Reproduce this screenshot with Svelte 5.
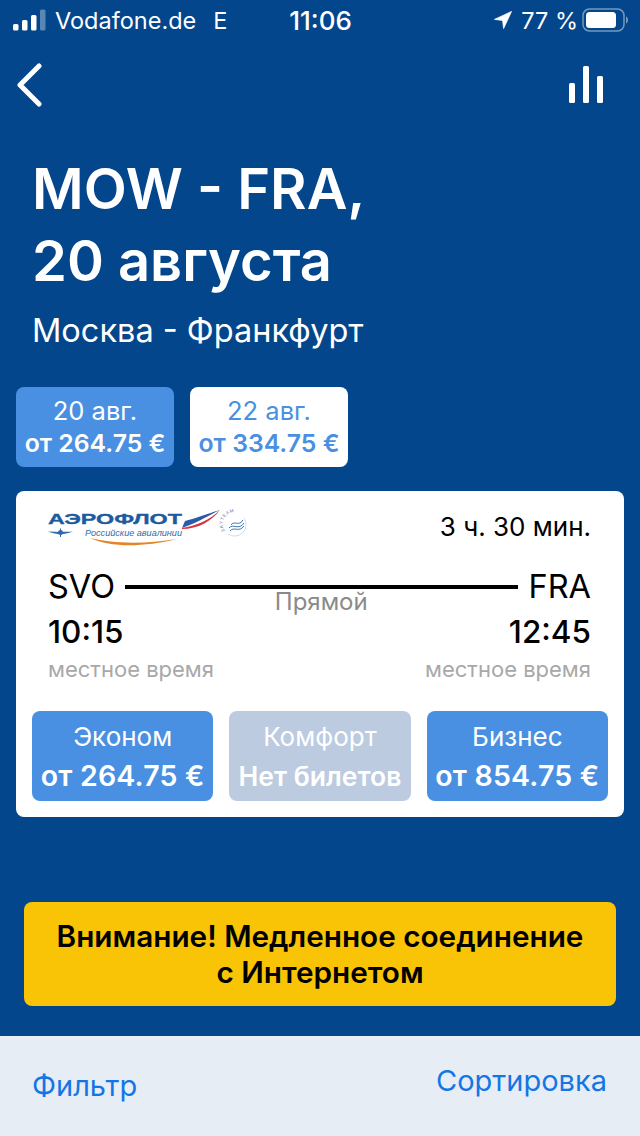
<script>
  const dates = [
    { day: "20 авг.", price: "от 264.75 €", active: true },
    { day: "22 авг.", price: "от 334.75 €", active: false },
  ];
  const fares = [
    { name: "Эконом", price: "от 264.75 €", off: false },
    { name: "Комфорт", price: "Нет билетов", off: true },
    { name: "Бизнес", price: "от 854.75 €", off: false },
  ];
</script>

<div class="page">
  <div class="status">
    <div class="status-left">
      <svg width="33" height="22" viewBox="0 0 33 22" fill="#fff">
        <rect x="0" y="15" width="5.5" height="6.5" rx="1.5" />
        <rect x="9" y="11" width="5.5" height="10.5" rx="1.5" />
        <rect x="18" y="6" width="5.5" height="15.5" rx="1.5" />
        <rect x="27" y="0.5" width="5.5" height="21" rx="1.5" opacity="0.35" />
      </svg>
      <span class="carrier">Vodafone.de</span>
      <span class="net">E</span>
    </div>
    <span class="clock">11:06</span>
    <div class="status-right">
      <svg class="arrow" width="18" height="18" viewBox="0 0 18 18" fill="#fff">
        <path d="M17.5 0.5 L0.5 8.4 L8.6 9.4 L9.6 17.5 Z" stroke="#fff" stroke-width="0.8" stroke-linejoin="round" />
      </svg>
      <span class="pct">77 %</span>
      <svg width="46" height="24" viewBox="0 0 46 24" fill="none">
        <rect x="1" y="1" width="41" height="22" rx="6.5" stroke="#fff" stroke-opacity="0.45" stroke-width="1.5" />
        <rect x="4" y="4" width="30" height="16" rx="3.5" fill="#fff" />
        <path d="M44 8.5c1.2.4 2 1.8 2 3.5s-.8 3.1-2 3.5z" fill="#fff" fill-opacity="0.45" />
      </svg>
    </div>
  </div>

  <div class="nav">
    <svg width="28" height="44" viewBox="0 0 28 44" fill="none" stroke="#fff" stroke-width="5" stroke-linecap="round" stroke-linejoin="round">
      <path d="M24 3 L5 22 L24 41" />
    </svg>
    <svg width="36" height="40" viewBox="0 0 36 40" fill="#fff">
      <rect x="1" y="18" width="6" height="20" rx="1.5" />
      <rect x="15" y="1" width="6" height="37" rx="1.5" />
      <rect x="29" y="11" width="6" height="27" rx="1.5" />
    </svg>
  </div>

  <div class="heading">
    <h1>MOW - FRA,<br />20 августа</h1>
    <p>Москва - Франкфурт</p>
  </div>

  <div class="dates">
    {#each dates as d}
      <div class="date" class:active={d.active}>
        <span class="date-day">{d.day}</span>
        <span class="date-price">{d.price}</span>
      </div>
    {/each}
  </div>

  <div class="card">
    <div class="card-top">
      <svg class="logo" width="206" height="40" viewBox="0 0 206 40" fill="none">
        <text x="0" y="17" class="logo-name" textLength="134" lengthAdjust="spacingAndGlyphs">АЭРОФЛОТ</text>
        <path d="M134 21 C148 19 162 13 172 3 C164 14 150 22 134 22 Z" fill="#d8323c" />
        <path d="M134 21 C146 17 158 10 172 3 C158 7 146 12 137 14 Z" fill="#2b5aa8" />
        <path d="M0 24.5 C8 25 18 25 25 24.5 C20 26.5 16 27 12.5 27 C9 27 5 26.5 0 24.5 Z" fill="#2f6ba8" />
        <circle cx="12.5" cy="25.5" r="2.5" fill="#2f6ba8" />
        <path d="M12.5 21.5 V30" stroke="#2f6ba8" stroke-width="1" />
        <text x="37" y="29" class="logo-sub" textLength="97" lengthAdjust="spacingAndGlyphs">Российские авиалинии</text>
        <path d="M42 31 C64 41 96 40 129 32 C98 37 66 37 42 31 Z" fill="#e2862a" />
        <path id="sky-arc" d="M177 24 A11.5 11.5 0 0 1 196 10" />
        <text class="logo-sky"><textPath href="#sky-arc">SKYTEAM</textPath></text>
        <path d="M196 11 A11.5 11.5 0 0 1 180 27" stroke="#c4d2e2" stroke-width="0.8" />
        <path d="M181 21 C185 16 191 24 196 16 M182 24 C186 19 191 26 196 19 M183 18 C186 13 191 20 195 13" stroke="#3d78b4" stroke-width="1" />
      </svg>
      <span class="duration">3 ч. 30 мин.</span>
    </div>

    <div class="route">
      <span class="code">SVO</span>
      <div class="line"><span class="direct">Прямой</span></div>
      <span class="code">FRA</span>
    </div>

    <div class="times">
      <div class="time-col">
        <span class="time">10:15</span>
        <span class="local">местное время</span>
      </div>
      <div class="time-col right">
        <span class="time">12:45</span>
        <span class="local">местное время</span>
      </div>
    </div>

    <div class="fares">
      {#each fares as f}
        <div class="fare" class:off={f.off}>
          <span class="fare-name">{f.name}</span>
          <span class="fare-price">{f.price}</span>
        </div>
      {/each}
    </div>
  </div>

  <div class="warning">Внимание! Медленное соединение<br />с Интернетом</div>

  <div class="footer">
    <span class="filter">Фильтр</span>
    <span class="sort">Сортировка</span>
  </div>
</div>

<style>
  :global(body) {
    margin: 0;
    background: #03468c;
  }

  .page {
    display: flex;
    flex-direction: column;
    height: 1136px;
    overflow: hidden;
    background: #03468c;
    color: #fff;
    font-family: Inter, "Noto Sans", sans-serif;
  }

  .status {
    display: grid;
    grid-template-columns: 1fr auto 1fr;
    align-items: center;
    height: 40px;
    padding: 0 12px 0 13px;
    font-size: 23.5px;
  }

  .status-left {
    display: flex;
    align-items: center;
    gap: 9px;
  }

  .net {
    margin-left: 8px;
  }

  .clock {
    font-size: 26px;
    font-weight: 500;
  }

  .status-right {
    display: flex;
    align-items: center;
    justify-content: flex-end;
    gap: 4px;
  }

  .arrow {
    margin-right: 5px;
  }

  .nav {
    display: flex;
    align-items: center;
    justify-content: space-between;
    height: 44px;
    margin-top: 23px;
    padding: 0 36px 0 15px;
  }

  .heading {
    padding: 0 32px;
    margin-top: 46px;
  }

  h1 {
    margin: 0;
    font-size: 56px;
    line-height: 72px;
    font-weight: 600;
  }

  .heading p {
    margin: 14px 0 0;
    font-size: 32.5px;
    line-height: 40px;
  }

  .dates {
    display: flex;
    gap: 16px;
    padding: 0 16px;
    margin-top: 36px;
  }

  .date {
    display: flex;
    flex-direction: column;
    align-items: center;
    justify-content: center;
    width: 158px;
    height: 80px;
    border-radius: 8px;
    background: #fff;
    color: #4a90e2;
  }

  .date.active {
    background: #4a90e2;
    color: #fff;
  }

  .date-day {
    font-size: 25.5px;
    line-height: 32px;
  }

  .date-price {
    font-size: 24.8px;
    line-height: 33px;
    font-weight: 600;
  }

  .card {
    margin: 24px 16px 0;
    height: 326px;
    box-sizing: border-box;
    padding: 16px 16px 16px;
    border-radius: 8px;
    background: #fff;
    color: #000;
  }

  .card-top {
    display: flex;
    align-items: flex-start;
    justify-content: space-between;
    padding: 0 17px 0 16px;
    height: 40px;
  }

  .duration {
    font-size: 26px;
    line-height: 40px;
  }

  .logo-name {
    font-family: "Liberation Sans", sans-serif;
    font-size: 15.5px;
    font-weight: 700;
    fill: #1d5a9e;
    stroke: #1d5a9e;
    stroke-width: 0.35px;
  }

  .logo-sub {
    font-family: "Liberation Sans", sans-serif;
    font-size: 8.5px;
    font-style: italic;
    fill: #2f6ba8;
  }

  .logo-sky {
    font-family: "Liberation Sans", sans-serif;
    font-size: 4.5px;
    letter-spacing: 0.6px;
    fill: #5b7c9f;
  }

  .route {
    display: flex;
    align-items: center;
    gap: 10px;
    padding: 0 17px 0 16px;
    margin-top: 20px;
    height: 40px;
  }

  .code {
    font-size: 32.5px;
    line-height: 40px;
  }

  .line {
    position: relative;
    flex: 1;
    height: 4px;
    background: #000;
  }

  .direct {
    position: absolute;
    left: -1px;
    right: 0;
    top: 3px;
    text-align: center;
    font-size: 24px;
    line-height: 28px;
    color: #8a8a8a;
  }

  .times {
    display: flex;
    justify-content: space-between;
    padding: 0 17px 0 16px;
    margin-top: 5px;
  }

  .time-col {
    display: flex;
    flex-direction: column;
  }

  .time-col.right {
    align-items: flex-end;
  }

  .time {
    font-size: 31.5px;
    line-height: 40px;
    font-weight: 500;
  }

  .local {
    margin-top: 3px;
    font-size: 22px;
    line-height: 28px;
    color: #a8a8a8;
  }

  .fares {
    display: grid;
    grid-template-columns: repeat(3, 1fr);
    gap: 16px;
    margin-top: 28px;
  }

  .fare {
    display: flex;
    flex-direction: column;
    align-items: center;
    justify-content: center;
    box-sizing: border-box;
    height: 90px;
    padding-top: 2px;
    border-radius: 8px;
    background: #4a90e2;
    color: #fff;
  }

  .fare.off {
    background: #bccbdf;
  }

  .fare-name {
    font-size: 26px;
    line-height: 38px;
  }

  .fare-price {
    font-size: 28.5px;
    letter-spacing: 0.2px;
    line-height: 40px;
    font-weight: 600;
    white-space: nowrap;
  }

  .fare.off .fare-price {
    font-size: 26.5px;
    letter-spacing: 0;
  }

  .warning {
    display: flex;
    align-items: center;
    justify-content: center;
    margin: auto 24px 30px;
    height: 104px;
    border-radius: 8px;
    background: #f8c405;
    color: #000;
    font-size: 29.7px;
    line-height: 36px;
    font-weight: 600;
    text-align: center;
  }

  .footer {
    display: flex;
    justify-content: space-between;
    height: 100px;
    flex-shrink: 0;
    padding: 0 33px 0 32px;
    background: #e6edf5;
    color: #1476e6;
    font-size: 29px;
  }

  .filter {
    margin-top: 32px;
  }

  .sort {
    margin-top: 27px;
  }
</style>
